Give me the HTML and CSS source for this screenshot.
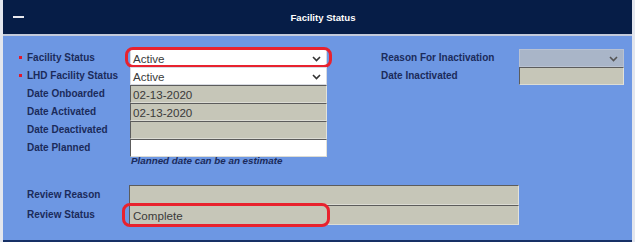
FILE: index.html
```html
<!DOCTYPE html>
<html lang="en">
<head>
    <meta charset="UTF-8">
    <meta name="viewport" content="width=device-width, initial-scale=1.0">
    <title>Facility Status</title>
    <link rel="stylesheet" href="styles.css">
</head>
<body>
    <div class="panel">
        <div class="panel-header">
            <span class="toggle"></span>
            <div class="panel-title">Facility Status</div>
        </div>
        <div class="panel-body">
            <div class="form-top">
                <div class="label required">Facility Status</div>
                <div class="field select highlight">
                    <span>Active</span>
                    <svg class="chevron" width="9" height="6" viewBox="0 0 9 6"><path d="M1 1 L4.5 4.5 L8 1" fill="none" stroke="#333" stroke-width="1.6"/></svg>
                    <div class="ring ring-select"></div>
                </div>
                <div class="label right">Reason For Inactivation</div>
                <div class="field select disabled">
                    <span></span>
                    <svg class="chevron" width="9" height="6" viewBox="0 0 9 6"><path d="M1 1 L4.5 4.5 L8 1" fill="none" stroke="#555" stroke-width="1.6"/></svg>
                </div>

                <div class="label required">LHD Facility Status</div>
                <div class="field select">
                    <span>Active</span>
                    <svg class="chevron" width="9" height="6" viewBox="0 0 9 6"><path d="M1 1 L4.5 4.5 L8 1" fill="none" stroke="#333" stroke-width="1.6"/></svg>
                </div>
                <div class="label right">Date Inactivated</div>
                <div class="field readonly"></div>

                <div class="label">Date Onboarded</div>
                <div class="field readonly">02-13-2020</div>

                <div class="label">Date Activated</div>
                <div class="field readonly">02-13-2020</div>

                <div class="label">Date Deactivated</div>
                <div class="field readonly"></div>

                <div class="label">Date Planned</div>
                <div class="field blank"></div>

                <div class="hint">Planned date can be an estimate</div>
            </div>

            <div class="form-review">
                <div class="label">Review Reason</div>
                <div class="field readonly"></div>

                <div class="label">Review Status</div>
                <div class="field readonly highlight">
                    Complete
                    <div class="ring ring-review"></div>
                </div>
            </div>
        </div>
    </div>
</body>
</html>
```

FILE: styles.css
```css
body {
    font-family: "Liberation Sans", Arial, sans-serif;
    background-color: #e3e6ee;
    margin: 0;
    padding: 0 3px 0 3px;
}

.panel {
    background-color: #6d97e3;
    border-bottom: 2px solid #163066;
}

.panel-header {
    display: flex;
    align-items: center;
    height: 34px;
    background-color: #061d47;
    border-bottom: 2px solid #c3cbdc;
}

.toggle {
    width: 11px;
    height: 2px;
    margin-left: 10px;
    background-color: #e8e8ee;
}

.panel-title {
    flex: 1;
    text-align: center;
    padding-right: 10px;
    color: white;
    font-weight: bold;
    font-size: 9.6px;
}

.panel-body {
    padding: 13px 0 15px 0;
}

.form-top {
    display: grid;
    grid-template-columns: 127px 197px 54px 138px 105px;
    grid-auto-rows: 18px;
}

.form-review {
    display: grid;
    grid-template-columns: 126px 390px;
    grid-auto-rows: 20px;
    margin-top: 10px;
}

.label {
    grid-column: 1;
    display: flex;
    align-items: center;
    padding-left: 24px;
    padding-bottom: 2px;
    font-size: 10px;
    font-weight: bold;
    color: #1b2b5b;
    white-space: nowrap;
}

.label.required::before {
    content: '';
    width: 3px;
    height: 3px;
    margin-left: -8px;
    margin-right: 5px;
    background-color: #e3162a;
}

.label.right {
    grid-column: 4;
    padding-left: 0;
}

.field {
    grid-column: 2;
    position: relative;
    display: flex;
    align-items: center;
    padding-left: 2px;
    font-size: 11.6px;
    color: #3a3a3a;
    border: 1px solid;
    border-color: #5c5c5c #e2e2da #dcdcd4 #5c5c5c;
}

.field.readonly {
    background-color: #c6c6b8;
}

.field.blank {
    background-color: white;
}

.field.select {
    justify-content: space-between;
    padding-right: 5px;
    background-color: white;
    border-color: #d8dbe2;
}

.field.select.disabled {
    grid-column: 5;
    background-color: #a9b5c8;
    border-color: #b9c2d2;
}

.form-top .label.right + .field.readonly {
    grid-column: 5;
}

.form-review .field {
    padding-left: 3px;
}

.chevron {
    margin-top: 1px;
}

.hint {
    grid-column: 2;
    margin-top: -2px;
    padding-left: 1px;
    font-size: 9.8px;
    font-weight: bold;
    font-style: italic;
    color: #1b2b5b;
}

.ring {
    position: absolute;
    border: 3px solid #e8222e;
    border-radius: 8px;
    pointer-events: none;
}

.ring-select {
    left: -6px;
    top: -3px;
    width: 201px;
    height: 15px;
}

.ring-review {
    left: -8px;
    top: -3px;
    width: 202px;
    height: 18px;
}
```
